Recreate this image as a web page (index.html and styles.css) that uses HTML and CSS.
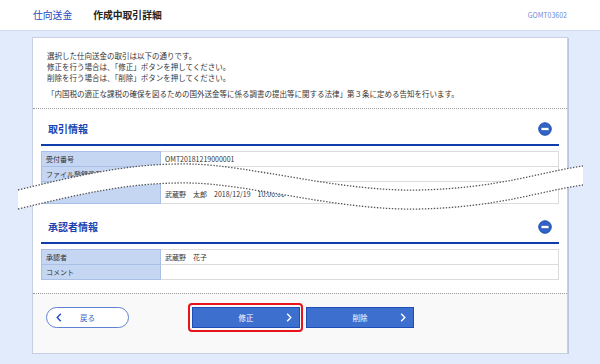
FILE: index.html
```html
<!DOCTYPE html>
<html lang="ja">
<head>
    <meta charset="UTF-8">
    <meta name="viewport" content="width=device-width, initial-scale=1.0">
    <title>作成中取引詳細</title>
    <link rel="stylesheet" href="styles.css">
</head>
<body>
    <header class="page-head">
        <div class="crumbs">
            <span class="crumb-link">仕向送金</span>
            <h1 class="page-title">作成中取引詳細</h1>
        </div>
        <span class="screen-id">GOMT03602</span>
    </header>

    <main class="page-body">
        <div class="card">
            <div class="intro">
                <p>選択した仕向送金の取引は以下の通りです。<br>修正を行う場合は、「修正」ボタンを押してください。<br>削除を行う場合は、「削除」ボタンを押してください。</p>
                <p class="notice">「内国税の適正な課税の確保を図るための国外送金等に係る調書の提出等に関する法律」第３条に定める告知を行います。</p>
            </div>

            <section class="block">
                <div class="block-head">
                    <h2>取引情報</h2>
                    <svg class="toggle" width="14" height="14" viewBox="0 0 14 14">
                        <circle cx="7" cy="7" r="6.3" fill="#3163c9" stroke="#1c48a8" stroke-width="0.9"/>
                        <rect x="3" y="5.4" width="8" height="3.2" rx="1.3" fill="#fff" stroke="#1c48a8" stroke-width="0.6"/>
                    </svg>
                </div>
                <table class="info">
                    <tr><th>受付番号</th><td>OMT20181219000001</td></tr>
                    <tr><th>ファイル登録番号</th><td></td></tr>
                    <tr class="tall"><th>作成者</th><td>武蔵野　太郎　2018/12/19　10:00:00</td></tr>
                </table>
            </section>

            <section class="block last">
                <div class="block-head second">
                    <h2>承認者情報</h2>
                    <svg class="toggle" width="14" height="14" viewBox="0 0 14 14">
                        <circle cx="7" cy="7" r="6.3" fill="#3163c9" stroke="#1c48a8" stroke-width="0.9"/>
                        <rect x="3" y="5.4" width="8" height="3.2" rx="1.3" fill="#fff" stroke="#1c48a8" stroke-width="0.6"/>
                    </svg>
                </div>
                <table class="info">
                    <tr><th>承認者</th><td>武蔵野　花子</td></tr>
                    <tr><th>コメント</th><td></td></tr>
                </table>
            </section>

            <div class="actions">
                <button class="btn-back">
                    <svg width="6" height="9" viewBox="0 0 6 9"><polyline points="4.8,0.8 1.2,4.5 4.8,8.2" fill="none" stroke="#1f4fbf" stroke-width="1.4"/></svg>
                    <span>戻る</span>
                </button>
                <div class="main-buttons">
                    <button class="btn-main focused">
                        <span>修正</span>
                        <svg width="6" height="9" viewBox="0 0 6 9"><polyline points="1.2,0.8 4.8,4.5 1.2,8.2" fill="none" stroke="#fff" stroke-width="1.4"/></svg>
                    </button>
                    <button class="btn-main">
                        <span>削除</span>
                        <svg width="6" height="9" viewBox="0 0 6 9"><polyline points="1.2,0.8 4.8,4.5 1.2,8.2" fill="none" stroke="#fff" stroke-width="1.4"/></svg>
                    </button>
                </div>
            </div>
        </div>
    </main>

    <!-- omitted-part marker drawn over the first table -->
    <svg class="cut" width="600" height="364" viewBox="0 0 600 364">
        <path d="M18 190 C80 175 130 163 190 164 C250 165 340 192 420 190 C500 188 540 172 583 166 L583 185 C540 191 500 207 420 209 C340 211 250 184 190 183 C130 182 80 194 18 209 Z" fill="#fff"/>
        <path d="M18 190 C80 175 130 163 190 164 C250 165 340 192 420 190 C500 188 540 172 583 166" fill="none" stroke="#555" stroke-width="1.3" stroke-dasharray="1.4 1.6"/>
        <path d="M18 209 C80 194 130 182 190 183 C250 184 340 211 420 209 C500 207 540 191 583 185" fill="none" stroke="#555" stroke-width="1.3" stroke-dasharray="1.4 1.6"/>
    </svg>
</body>
</html>
```

FILE: styles.css
```css
body {
    margin: 0;
    background-color: #e1ebfb;
    font-family: "Noto Sans CJK JP", "Noto Sans", sans-serif;
    font-size: 7.5px;
    color: #333;
}
p, h1, h2 {
    margin: 0;
}

.page-head {
    display: flex;
    justify-content: space-between;
    align-items: center;
    height: 30px;
    padding: 0 33px;
    background-color: #fff;
}
.crumbs {
    display: flex;
    align-items: center;
    gap: 21px;
}
.crumb-link {
    font-size: 9.8px;
    color: #1b4bc0;
}
.page-title {
    font-size: 9.8px;
    font-weight: bold;
    color: #222;
}
.screen-id {
    font-size: 7px;
    color: #6a8cdc;
}

.page-body {
    border-top: 1px solid #d2ddf4;
    padding: 6px 32px 0;
}
.card {
    background-color: #fff;
    border: 1px solid #c7d0e2;
    box-shadow: 1px 1px 0 #bac6dd;
}

.intro {
    padding: 12px 14px 9px;
    border-bottom: 1px dotted #9a9a9a;
    line-height: 11px;
}
.intro .notice {
    margin-top: 5px;
}

.block {
    margin: 0 8px;
}
.block.last {
    padding-bottom: 13px;
}
.block-head {
    display: flex;
    justify-content: space-between;
    align-items: center;
    padding: 13px 7px 8px;
    border-bottom: 2px solid #0f3eac;
}
.block-head.second {
    padding-top: 16px;
}
.block-head h2 {
    font-size: 10px;
    line-height: 12px;
    color: #1a44b2;
    font-weight: bold;
}
.toggle {
    display: block;
}

.info {
    width: 100%;
    margin-top: 5px;
    border-collapse: collapse;
    font-size: 7px;
}
.info th, .info td {
    height: 14px;
    padding: 0 4px;
    text-align: left;
    font-weight: normal;
    border: 1px solid #dcdcdc;
}
.info th {
    width: 110px;
    background-color: #c5d6f2;
    border-color: #a9bfe6;
}
.info .tall th, .info .tall td {
    height: 19px;
    padding-top: 2px;
}

.actions {
    display: flex;
    align-items: center;
    gap: 63px;
    padding: 13px 13px 25px;
    border-top: 1px dotted #9a9a9a;
    background-color: #f9f9f9;
}
.main-buttons {
    display: flex;
    gap: 6px;
}
button {
    font-family: inherit;
    font-size: 7.5px;
    height: 21px;
    margin: 0;
    cursor: pointer;
}
.btn-back {
    display: grid;
    grid-template-columns: 1fr auto 1fr;
    align-items: center;
    width: 83px;
    padding: 0 9px;
    border: 1px solid #5d82d2;
    border-radius: 11px;
    background-color: #fff;
    color: #3a64c4;
}
.btn-back svg {
    display: block;
}
.btn-main {
    position: relative;
    display: grid;
    grid-template-columns: 1fr auto 1fr;
    align-items: center;
    width: 108px;
    padding: 0 7px;
    border: 1px solid #1e4db6;
    background-color: #3d6fcf;
    color: #fff;
}
.btn-main span {
    grid-column: 2;
}
.btn-main svg {
    display: block;
    justify-self: end;
}
.btn-main.focused::after {
    content: "";
    position: absolute;
    top: -5px;
    left: -5px;
    right: -4px;
    bottom: -5px;
    border: 2.5px solid #e8141c;
    border-radius: 4px;
}

.cut {
    position: absolute;
    top: 0;
    left: 0;
    pointer-events: none;
}
```
